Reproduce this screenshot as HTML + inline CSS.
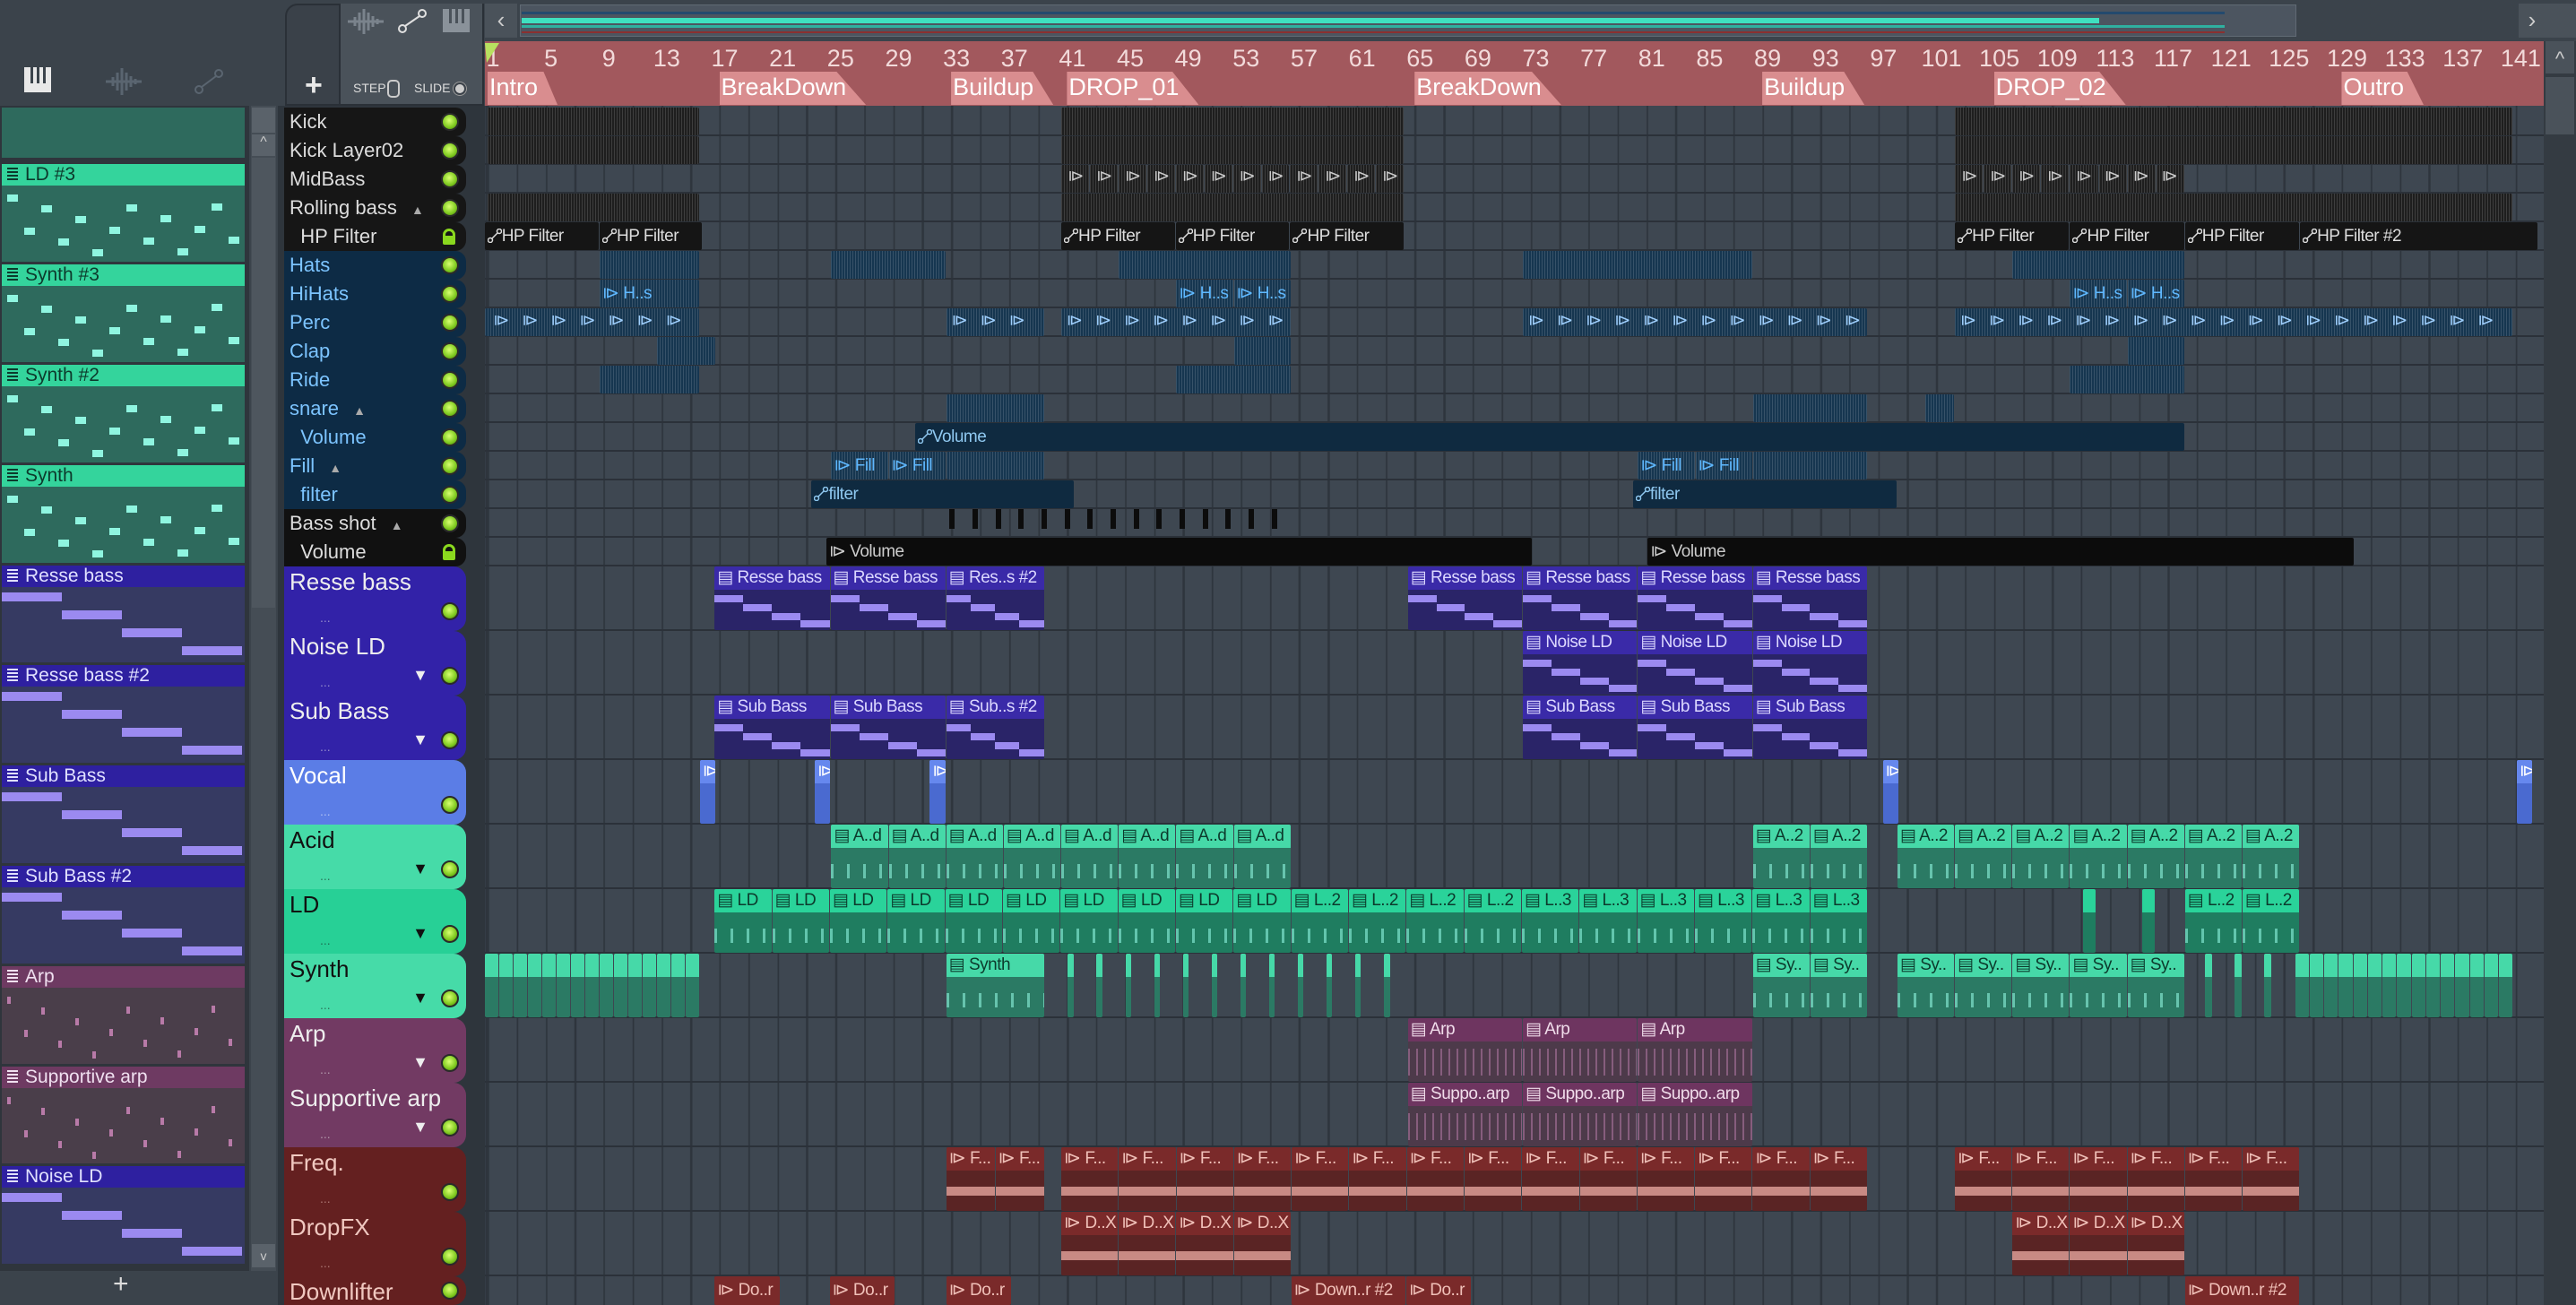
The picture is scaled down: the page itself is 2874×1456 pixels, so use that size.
<!DOCTYPE html>
<html style="width:2874px;height:1456px;overflow:hidden"><head><meta charset="utf-8">
<style>
*{box-sizing:border-box;margin:0;padding:0}
html,body{width:2874px;height:1456px;overflow:hidden}
body{background:#3b434b;font-family:"Liberation Sans Narrow","Liberation Sans",sans-serif;position:relative}
.a{position:absolute}
#grid{position:absolute;left:541px;top:118px;width:2297px;height:1338px;background-color:#3e4751;
background-image:repeating-linear-gradient(90deg,#2e353d 0 2px,transparent 2px 32.32px);background-position:3px 0}
.rl{position:absolute;left:541px;width:2297px;height:2px;background:#2b3139}
.hd{position:absolute;left:317px;width:203px;border-radius:0 12px 12px 0;color:#e8e8e8;padding-left:6px;overflow:hidden;white-space:nowrap}
.led{position:absolute;right:8px;width:20px;height:20px;border-radius:50%;background:radial-gradient(circle at 45% 40%,#d8ff70,#7dc81e 60%,#3d6a10);border:2px solid #2a2a2a}
.c{position:absolute;overflow:hidden;white-space:nowrap;border-radius:2px}
.cl{position:absolute;left:0;top:0;right:0;font-size:19px;padding-left:3px;line-height:24px;letter-spacing:-0.5px}
.pp{position:absolute;left:2px;width:271px}
.ph{height:24px;font-size:21px;line-height:24px;padding-left:26px;position:relative}
.ph:before{content:"";position:absolute;left:6px;top:4px;width:12px;height:16px;background:repeating-linear-gradient(180deg,currentColor 0 2px,transparent 2px 4px)}
.rn{position:absolute;top:50px;font-size:27px;color:#f2dada;transform:translateX(-50%)}
.mk{position:absolute;top:80px;height:37px;background:#d98d8f;color:#fff;font-size:27px;line-height:34px;padding:0 22px 0 2px;clip-path:polygon(0 0,80% 0,100% 100%,0 100%)}
</style></head><body>
<div class="a" style="left:0;top:0;width:310px;height:118px;background:#3b434b"></div>
<svg class="a" style="left:26px;top:74px" width="32" height="30"><rect x="1" y="1" width="30" height="28" fill="#e8e8e8"/><rect x="8" y="1" width="3" height="18" fill="#3b434b"/><rect x="15" y="1" width="3" height="18" fill="#3b434b"/><rect x="22" y="1" width="3" height="18" fill="#3b434b"/></svg>
<svg class="a" style="left:118px;top:76px" width="40" height="30"><path d="M0 15h40M8 10v10M13 5v20M18 0v30M23 5v20M28 9v12M33 12v6" stroke="#5a6570" stroke-width="3"/></svg>
<svg class="a" style="left:216px;top:76px" width="34" height="30"><circle cx="6" cy="24" r="4" fill="none" stroke="#5a6570" stroke-width="2"/><circle cx="28" cy="6" r="4" fill="none" stroke="#5a6570" stroke-width="2"/><path d="M9 21L25 9" stroke="#5a6570" stroke-width="2"/></svg>
<div class="a" style="left:318px;top:4px;width:222px;height:114px;background:#3a4149;border-radius:14px 0 0 0;border:2px solid #2a3037"></div>
<div class="a" style="left:378px;top:4px;width:160px;height:112px;background:#4a525a;border-left:2px solid #2a3037"></div>
<div class="a" style="left:340px;top:76px;color:#e8e8e8;font-size:34px;font-weight:bold">+</div>
<svg class="a" style="left:388px;top:10px" width="40" height="28"><path d="M0 14h40M8 9v10M13 4v20M18 0v28M23 4v20M28 8v12M33 11v6" stroke="#7a838c" stroke-width="3"/></svg>
<svg class="a" style="left:444px;top:10px" width="32" height="28"><circle cx="5" cy="22" r="4" fill="none" stroke="#e0e0e0" stroke-width="2"/><circle cx="27" cy="5" r="4" fill="none" stroke="#e0e0e0" stroke-width="2"/><path d="M8 19L24 8" stroke="#e0e0e0" stroke-width="2"/></svg>
<svg class="a" style="left:494px;top:10px" width="30" height="26"><rect width="30" height="26" fill="#8a929a"/><rect x="7" width="3" height="16" fill="#4a525a"/><rect x="14" width="3" height="16" fill="#4a525a"/><rect x="21" width="3" height="16" fill="#4a525a"/></svg>
<div class="a" style="left:394px;top:90px;color:#ddd;font-size:14px">STEP</div>
<div class="a" style="left:432px;top:89px;width:14px;height:20px;border:2px solid #ccc;border-radius:5px"></div>
<div class="a" style="left:462px;top:90px;color:#ddd;font-size:14px">SLIDE</div>
<div class="a" style="left:508px;top:94px;width:10px;height:10px;border-radius:50%;background:#ccc;box-shadow:0 0 0 2px #3a4149,0 0 0 3px #999"></div>
<div class="a" style="left:541px;top:4px;width:36px;height:38px;background:#4a525a;color:#ccc;font-size:26px;text-align:center;line-height:36px">&lsaquo;</div>
<div class="a" style="left:580px;top:5px;width:1982px;height:36px;background:#4c5560;border:1px solid #606a74"></div>
<div class="a" style="left:582px;top:20px;width:1760px;height:6px;background:#3fe0c0"></div>
<div class="a" style="left:582px;top:28px;width:1900px;height:3px;background:#2fb0a0"></div>
<div class="a" style="left:582px;top:13px;width:1900px;height:3px;background:#244a6e"></div>
<div class="a" style="left:582px;top:35px;width:1900px;height:2px;background:#8a3030"></div>
<div class="a" style="left:2810px;top:4px;width:30px;height:38px;background:#4a525a;color:#ccc;font-size:26px;text-align:center;line-height:36px">&rsaquo;</div>
<div class="a" style="left:2840px;top:4px;width:34px;height:38px;background:#4a525a"></div>
<div class="a" style="left:541px;top:46px;width:2297px;height:72px;background:#a2585d"></div>
<div id="ruler"></div>
<svg class="a" style="left:541px;top:48px" width="16" height="22"><path d="M0 0h16L2 22z" fill="#b8e060"/></svg>
<div class="a" style="left:2838px;top:46px;width:36px;height:1410px;background:#343b42"></div>
<div class="a" style="left:2840px;top:46px;width:32px;height:36px;background:#4a525a;color:#ccc;text-align:center;font-size:22px;line-height:40px">^</div>
<div class="a" style="left:2840px;top:86px;width:32px;height:64px;background:#4a525a"></div>
<div class="a" style="left:0;top:118px;width:278px;height:1300px;background:#2f353c"></div>
<div class="a" style="left:280px;top:118px;width:28px;height:1300px;background:#454d55"></div>
<div class="a" style="left:281px;top:120px;width:26px;height:28px;background:#5a626a"></div>
<div class="a" style="left:281px;top:150px;width:26px;height:24px;background:#5a626a;color:#ccc;text-align:center;font-size:16px">^</div>
<div class="a" style="left:281px;top:176px;width:26px;height:502px;background:#4e565e"></div>
<div class="a" style="left:281px;top:1388px;width:26px;height:26px;background:#5a626a;color:#ccc;text-align:center;font-size:14px;line-height:26px">v</div>
<div class="a" style="left:0;top:1418px;width:310px;height:38px;background:#3b434b"></div>
<div class="a" style="left:126px;top:1416px;color:#ddd;font-size:30px">+</div>
<div id="pats"></div>
<div class="a" style="left:310px;top:118px;width:231px;height:1338px;background:#2e353c"></div>
<div id="grid"></div>
<div id="rows"></div>
<div id="clips"></div>
<script>
const S=2874/1568;
let r='';
for(let b=1;b<=141;b+=4){const x=544+(b-1)*16.16;r+=`<div class="rn" style="left:${x+6}px">${b}</div>`}
[['Intro',1],['BreakDown',17],['Buildup',33],['DROP_01',41],['BreakDown',65],['Buildup',89],['DROP_02',105],['Outro',129]].forEach(m=>{r+=`<div class="mk" style="left:${544+(m[1]-1)*16.16}px">${m[0]}</div>`});
document.getElementById('ruler').innerHTML=r;
const pats=[[-1,'','#2e6a5d','#34d49c','#0c3a2c'],[100,'LD #3','#2e6a5d','#34d49c','#0c3a2c'],[161,'Synth #3','#2e6a5d','#34d49c','#0c3a2c'],[222,'Synth #2','#2e6a5d','#34d49c','#0c3a2c'],[283,'Synth','#2e6a5d','#34d49c','#0c3a2c'],[344,'Resse bass','#363a62','#2e20a0','#e0e0ff'],[405,'Resse bass #2','#363a62','#2e20a0','#e0e0ff'],[466,'Sub Bass','#363a62','#2e20a0','#e0e0ff'],[527,'Sub Bass #2','#363a62','#2e20a0','#e0e0ff'],[588,'Arp','#4a3e4a','#6e3a62','#f0e0f0'],[649,'Supportive arp','#4a3e4a','#6e3a62','#f0e0f0'],[710,'Noise LD','#363a62','#2e20a0','#e0e0ff']];
let p='';
pats.forEach((q,i)=>{let y=q[0]*S, h=61*S-3;
 if(q[0]<0){p+=`<div class="pp a" style="top:120px;height:56px;background:${q[2]}"></div>`;return}
 const nc=q[3]=='#34d49c'?'#8ff5e0':(q[3]=='#6e3a62'?'#b87aa8':'#9b8af0');
 let notes='';
 if(q[3]=='#2e20a0'){for(let k=0;k<4;k++)notes+=`<div class="a" style="left:${k*67}px;top:${30+k*20}px;width:67px;height:10px;background:${nc}"></div>`}
 else for(let k=0;k<14;k++){notes+=`<div class="a" style="left:${6+k*19}px;top:${34+((k*37)%62)}px;width:${q[3]=='#34d49c'?12:4}px;height:8px;background:${nc}"></div>`}
 p+=`<div class="pp a" style="top:${y}px;height:${h}px;background:${q[2]}"><div class="ph" style="background:${q[3]};color:${q[4]}">${q[1]}</div>${notes}</div>`});
document.getElementById('pats').innerHTML=p;
const small=[['Kick','#161616','#ddd'],['Kick Layer02','#161616','#ddd'],['MidBass','#161616','#ddd'],['Rolling bass ▲','#161616','#ddd'],['&nbsp;&nbsp;HP Filter','#161616','#ddd'],['Hats','#0d2b45','#7cc4ff'],['HiHats','#0d2b45','#7cc4ff'],['Perc','#0d2b45','#7cc4ff'],['Clap','#0d2b45','#7cc4ff'],['Ride','#0d2b45','#7cc4ff'],['snare ▲','#0d2b45','#7cc4ff'],['&nbsp;&nbsp;Volume','#0d2b45','#7cc4ff'],['Fill ▲','#0d2b45','#7cc4ff'],['&nbsp;&nbsp;filter','#0d2b45','#7cc4ff'],['Bass shot ▲','#111','#ddd'],['&nbsp;&nbsp;Volume','#111','#ddd']];
const big=[['Resse bass','#3222a8','#eee',''],['Noise LD','#3222a8','#eee','▼'],['Sub Bass','#3222a8','#eee','▼'],['Vocal','#5b7de6','#fff',''],['Acid','#46dba8','#111','▼'],['LD','#27d096','#111','▼'],['Synth','#46dba8','#111','▼'],['Arp','#723a63','#eee','▼'],['Supportive arp','#723a63','#eee','▼'],['Freq.','#642020','#f0c8c0',''],['DropFX','#642020','#f0c8c0',''],['Downlifter','#642020','#f0c8c0','']];
let h='';
small.forEach((s,i)=>{const y=120+i*32;
 const lock=(i==4||i==15);
 h+=`<div class="hd" style="top:${y}px;height:32px;background:${s[1]};color:${s[2]};font-size:22px;line-height:32px">${s[0].replace('▲','<span style="font-size:14px;margin-left:10px;color:#aaa">▲</span>')}${lock?'<div class="a" style="right:12px;top:7px;width:14px;height:18px;border:3px solid #8ad81e;border-bottom:10px solid #8ad81e;border-radius:7px 7px 2px 2px"></div>':'<div class="led" style="top:6px"></div>'}</div>`;
 h+=`<div class="rl" style="top:${y+30}px"></div>`});
big.forEach((s,i)=>{const y=632+i*72, ht=(i==11?32:72);
 h+=`<div class="hd" style="top:${y}px;height:${ht}px;background:${s[1]};color:${s[2]};font-size:26px;line-height:34px;border-radius:0 14px 14px 0">${s[0]}${s[3]?`<span class="a" style="right:42px;top:32px;font-size:18px">${s[3]}</span>`:''}${i<11?'<span class="a" style="left:40px;top:40px;font-size:14px;opacity:.5">...</span><div class="led" style="top:40px"></div>':'<div class="led" style="top:6px"></div>'}</div>`;
 h+=`<div class="rl" style="top:${y+70}px"></div>`});
document.getElementById('rows').innerHTML=h;
const ST={k:['#1e1e1e','#1e1e1e','#ccc',1],ka:['#151515','#151515','#ddd',0],b:['#163650','#163650','#5fb8ff',1],ba:['#0f2a40','#0f2a40','#8fc8f0',0],bk:['#0c0c0c','#0c0c0c','#ccc',0],
p:['#3a2aa8','#2a2468','#dcd8ff'],v:['#6688ee','#4a6ad0','#fff'],g:['#46d9a8','#2b7a64','#0c3a2c'],g2:['#2ad39a','#1f7d60','#0c3a2c'],a:['#6e3560','#4d3a4a','#f0dcea'],r:['#7a2a2a','#5a2424','#f0c0b8']};
let c='';
function clip(row,x1,x2,lab,st,n){n=n||1;const w=(x2-x1)/n;
 for(let k=0;k<n;k++){const L=(x1+w*k)*S,W=w*S-1;const t=ST[st];const l=Array.isArray(lab)?lab[k]:lab;
  if(row<16){const y=120+row*32;
   const stripes=t[3]?`background-image:repeating-linear-gradient(90deg,rgba(255,255,255,.14) 0 1px,transparent 1px 3px);`:'';
   const ic=(st=='ka'||st=='ba')?'<svg width="16" height="16" style="vertical-align:-2px"><circle cx="3" cy="13" r="2.5" fill="none" stroke="currentColor" stroke-width="1.5"/><circle cx="13" cy="3" r="2.5" fill="none" stroke="currentColor" stroke-width="1.5"/><path d="M5 11L11 5" stroke="currentColor" stroke-width="1.5"/></svg>':(l?'⧐ ':'');
   c+=`<div class="c" style="left:${L}px;top:${y}px;width:${W}px;height:31px;background-color:${t[0]};${stripes}color:${t[2]}"><div class="cl" style="line-height:31px">${l?ic+l:''}</div></div>`;
  }else{const y=632+(row-16)*72;const hh=row==27?32:71;
   c+=`<div class="c" style="left:${L}px;top:${y}px;width:${W}px;height:${hh}px;background:${t[1]};color:${t[2]}"><div class="cl" style="background:${t[0]};height:${row==27?32:26}px;line-height:${row==27?32:26}px">${l}</div>${row!=27&&W>20?body(st,W):''}</div>`;
  }}}
function body(st,W){if(st=='r')return `<div class="a" style="left:0;right:0;top:44px;height:10px;background:#c88a84"></div>`;
 if(st=='p')return `<div class="a" style="left:0;width:25%;top:32px;height:8px;background:#9b8af0"></div><div class="a" style="left:25%;width:25%;top:42px;height:8px;background:#9b8af0"></div><div class="a" style="left:50%;width:25%;top:52px;height:8px;background:#9b8af0"></div><div class="a" style="left:75%;width:25%;top:60px;height:8px;background:#9b8af0"></div>`;
 if(st=='g'||st=='g2')return `<div class="a" style="left:0;right:0;top:44px;height:16px;background:repeating-linear-gradient(90deg,#8ff5e0 0 3px,transparent 3px 18px);opacity:.6"></div>`;
 if(st=='a')return `<div class="a" style="left:0;right:0;top:34px;height:30px;background:repeating-linear-gradient(90deg,#c080b0 0 2px,transparent 2px 9px);opacity:.5"></div>`;
 return '';}
[[297,426],[646,855],[1190,1530]].forEach(a=>{clip(0,a[0],a[1],'','k');clip(1,a[0],a[1],'','k');clip(3,a[0],a[1],'','k')});
clip(2,646,855,'','k',12);clip(2,1190,1330,'','k',8);
for(let i=0;i<12;i++)c+=`<div class="a" style="left:${(650+i*17.4)*S}px;top:186px;color:#ccc;font-size:18px">⧐</div>`;
for(let i=0;i<8;i++)c+=`<div class="a" style="left:${(1194+i*17.4)*S}px;top:186px;color:#ccc;font-size:18px">⧐</div>`;
clip(4,295,365,'HP Filter','ka');clip(4,365,428,'HP Filter','ka');clip(4,646,855,'HP Filter','ka',3);clip(4,1190,1400,'HP Filter','ka',3);clip(4,1400,1545,'HP Filter #2','ka');
[[365,426],[506,576],[681,786],[927,1067],[1225,1330]].forEach(a=>clip(5,a[0],a[1],'','b'));
clip(6,365,426,'H..s','b');clip(6,716,786,'H..s','b',2);clip(6,1260,1330,'H..s','b',2);
clip(7,295,426,'','b');clip(7,576,636,'','b');clip(7,646,786,'','b');clip(7,927,1137,'','b');clip(7,1190,1530,'','b');
[[297,426],[576,636],[646,786],[927,1137],[1190,1530]].forEach(a=>{for(let x=a[0];x<a[1]-8;x+=17.5)c+=`<div class="a" style="left:${x*S+6}px;top:347px;color:#9fd0ff;font-size:18px">⧐</div>`});
[[400,436],[751,786],[1295,1330]].forEach(a=>clip(8,a[0],a[1],'','b'));
[[365,426],[716,786],[1260,1330]].forEach(a=>clip(9,a[0],a[1],'','b'));
[[576,636],[1067,1137],[1172,1190]].forEach(a=>clip(10,a[0],a[1],'','b'));
clip(11,557,1330,'Volume','ba');
clip(12,506,576,'Fill','b',2);clip(12,576,636,'','b');clip(12,997,1067,'Fill','b',2);clip(12,1067,1137,'','b');
clip(13,494,654,'filter','ba');clip(13,994,1155,'filter','ba');
for(let x=578;x<776;x+=14)c+=`<div class="a" style="left:${x*S}px;top:568px;width:6px;height:22px;background:#0c0c0c"></div>`;
clip(15,503,933,'Volume','bk');clip(15,1003,1433,'Volume','bk');
clip(16,435,576,'▤ Resse bass','p',2);clip(16,576,636,'▤ Res..s #2','p');clip(16,857,1137,'▤ Resse bass','p',4);
clip(17,927,1137,'▤ Noise LD','p',3);
clip(18,435,576,'▤ Sub Bass','p',2);clip(18,576,636,'▤ Sub..s #2','p');clip(18,927,1137,'▤ Sub Bass','p',3);
[426,496,566,1146,1532].forEach(x=>clip(19,x,x+10,'⧐','v'));
clip(20,506,786,'▤ A..d','g',8);clip(20,1067,1137,'▤ A..2','g',2);clip(20,1155,1400,'▤ A..2','g',7);
let ldl=[];for(let i=0;i<20;i++)ldl.push(i<10?'▤ LD':(i<14?'▤ L..2':'▤ L..3'));
clip(21,435,1137,ldl,'g2',20);clip(21,1268,1276,'','g2');clip(21,1304,1312,'','g2');clip(21,1330,1400,'▤ L..2','g2',2);
clip(22,295,426,'','g',15);clip(22,576,636,'▤ Synth','g');
for(let x=650;x<860;x+=17.5)clip(22,x,x+4,'','g');
clip(22,1067,1137,'▤ Sy..','g',2);clip(22,1155,1330,'▤ Sy..','g',5);
[1342,1360,1378].forEach(x=>clip(22,x,x+5,'','g'));clip(22,1397,1530,'','g',15);
clip(23,857,1067,'▤ Arp','a',3);clip(24,857,1067,'▤ Suppo..arp','a',3);
clip(25,576,636,'⧐ F...','r',2);clip(25,646,1137,'⧐ F...','r',14);clip(25,1190,1400,'⧐ F...','r',6);
clip(26,646,786,'⧐ D..X','r',4);clip(26,1225,1330,'⧐ D..X','r',3);
clip(27,435,475,'⧐ Do..r','r');clip(27,505,545,'⧐ Do..r','r');clip(27,576,616,'⧐ Do..r','r');clip(27,786,856,'⧐ Down..r #2','r');clip(27,856,896,'⧐ Do..r','r');clip(27,1330,1400,'⧐ Down..r #2','r');
document.getElementById('clips').innerHTML=c;
</script>
</body></html>
